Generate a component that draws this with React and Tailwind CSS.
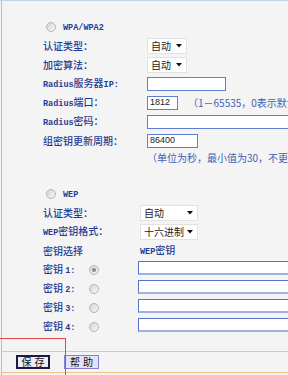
import React from 'react';

// Small monospace Latin run inside the CJK labels
const L = ({ children }) => (
  <span className="font-['Liberation_Mono',monospace] font-bold text-[8.5px]">{children}</span>
);

const Radio = ({ checked }) => (
  <span className="w-[10px] h-[10px] shrink-0 rounded-full border border-[#b4b4b4] bg-linear-to-br from-[#d4d4d4] to-[#f8f8f8] flex items-center justify-center">
    {checked && <span className="w-[4px] h-[4px] rounded-full bg-[#8a8a8a]" />}
  </span>
);

const Arrow = () => (
  <svg width="6" height="4" viewBox="0 0 6 4" className="shrink-0">
    <polygon points="0,0 6,0 3,3.5" fill="#111" />
  </svg>
);

const Select = ({ value, width }) => (
  <div className={`${width} h-[16px] bg-white border border-[#e2e2e2] flex items-center justify-between pl-[3px] pr-[4px] text-[#222]`}>
    <span>{value}</span>
    <Arrow />
  </div>
);

const Row = ({ label, labelWidth = 'w-[145px]', children }) => (
  <div className="h-[19px] flex items-center whitespace-nowrap">
    <div className={`${labelWidth} shrink-0 pl-[41px] font-medium text-[#1f3d96]`}>{label}</div>
    {children}
  </div>
);

const Input = ({ width, value }) => (
  <div className={`${width} h-[14px] shrink-0 bg-white border border-[#5f7fd2] flex items-center pl-[2px] font-['Liberation_Sans',sans-serif] text-[9px] text-[#222]`}>
    {value}
  </div>
);

const KeyRow = ({ n, checked }) => (
  <div className="h-[19px] flex items-center whitespace-nowrap">
    <div className="w-[87px] shrink-0 pl-[41px] font-medium text-[#1f3d96]">
      密钥 <L>{n}:</L>
    </div>
    <Radio checked={checked} />
    <div className="ml-[39px] self-start mt-px w-[200px] h-[14px] shrink-0 bg-white border-t border-l border-[#5473cc] border-b-2 border-b-[#9eb2e2]" />
  </div>
);

export default function App() {
  return (
    <div className="relative w-[288px] h-[375px] overflow-hidden bg-[#f4f4f4] border-t border-[#bcd3ea] font-['Noto_Sans_CJK_SC',sans-serif] text-[10px] leading-none">
      <div className="ml-px h-full border-l border-[#f5b06e] flex flex-col">
        <div className="pt-[16px]">
          <div className="h-[19px] flex items-center pl-[44px]">
            <Radio />
            <span className="ml-[7px] text-[#1f3d96]"><L>WPA/WPA2</L></span>
          </div>
          <Row label="认证类型：">
            <Select value="自动" width="w-[40px]" />
          </Row>
          <Row label="加密算法：">
            <Select value="自动" width="w-[40px]" />
          </Row>
          <Row label={<><L>Radius</L>服务器<L>IP:</L></>}>
            <Input width="w-[79px]" />
          </Row>
          <Row label={<><L>Radius</L>端口：</>}>
            <Input width="w-[31px]" value="1812" />
            <span className="ml-[10px] text-[#3d5fb4]">（1－65535，0表示默认）</span>
          </Row>
          <Row label={<><L>Radius</L>密码：</>}>
            <Input width="w-[200px]" />
          </Row>
          <Row label="组密钥更新周期：">
            <Input width="w-[51px]" value="86400" />
          </Row>
          <div className="h-[16px] flex items-center pl-[145px] whitespace-nowrap text-[#3d5fb4]">
            （单位为秒，最小值为30，不更新则为0）
          </div>
        </div>

        <div className="h-[19px]" />

        <div className="h-[18px] flex items-center pl-[44px]">
          <Radio />
          <span className="ml-[7px] text-[#1f3d96]"><L>WEP</L></span>
        </div>
        <Row label="认证类型：" labelWidth="w-[138px]">
          <Select value="自动" width="w-[58px]" />
        </Row>
        <Row label={<><L>WEP</L>密钥格式：</>} labelWidth="w-[138px]">
          <Select value="十六进制" width="w-[58px]" />
        </Row>
        <Row label="密钥选择" labelWidth="w-[138px]">
          <span className="font-medium text-[#1f3d96]"><L>WEP</L>密钥</span>
        </Row>
        <KeyRow n="1" checked />
        <KeyRow n="2" />
        <KeyRow n="3" />
        <KeyRow n="4" />

        <div className="h-[15px]" />

        <div className="h-[22px] border-y border-[#f7c08c] flex items-center pl-[14px] gap-[14px]">
          <button className="w-[34px] h-[14px] border-2 border-[#1c1c3c] bg-[#ececfc] text-[#111] text-[10px] leading-none tracking-[3px] pl-[3px]">保存</button>
          <button className="w-[35px] h-[14px] border border-[#7f7fd6] bg-[#e2e2fc] text-[#111] text-[10px] leading-none tracking-[3px] pl-[3px]">帮助</button>
        </div>
      </div>

      {/* red annotation marks over the page */}
      <div className="absolute left-0 top-[337px] w-[66px] h-px bg-[#e2474a]" />
      <div className="absolute left-[65px] top-[337px] bottom-0 w-px bg-[#e2474a]" />
    </div>
  );
}
